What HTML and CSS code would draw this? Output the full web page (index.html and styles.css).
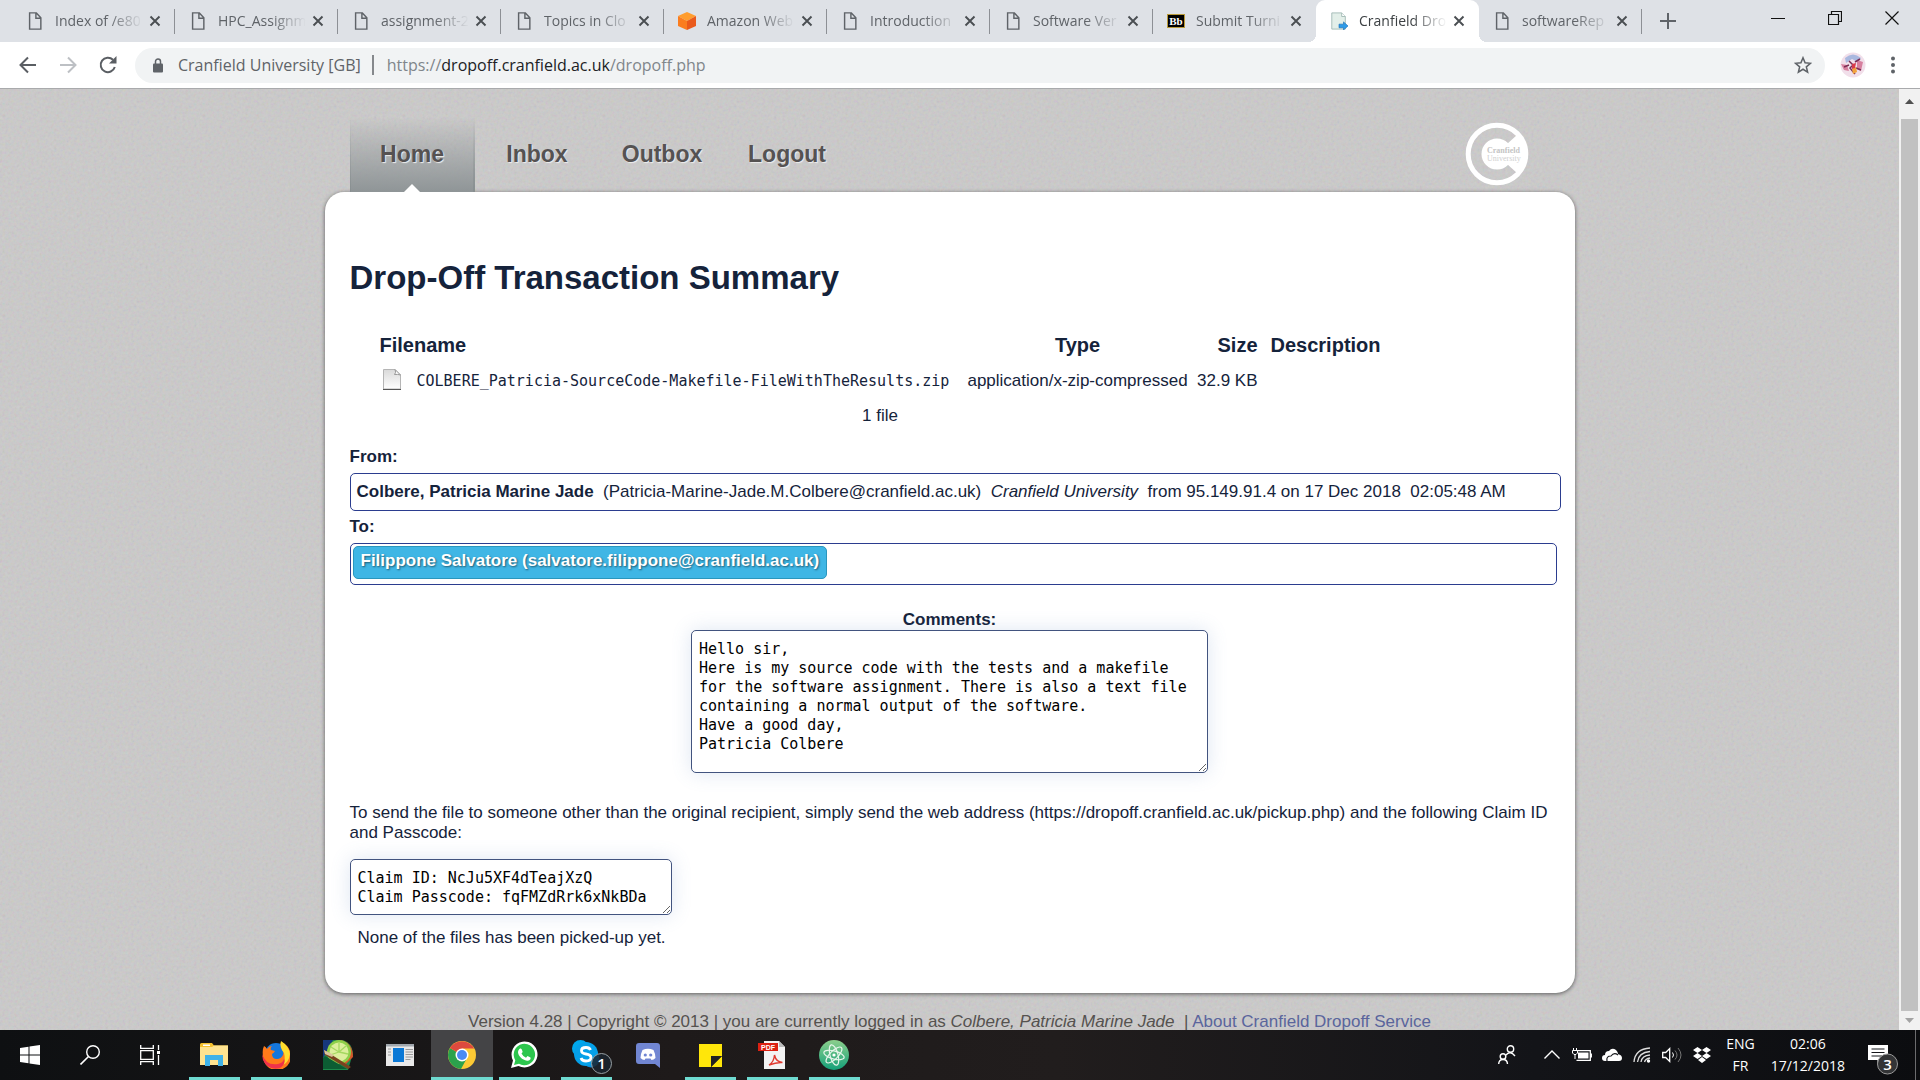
FILE: index.html
```html
<!DOCTYPE html>
<html lang="en">
<head>
<meta charset="utf-8">
<title>Cranfield Dropoff</title>
<link rel="stylesheet" href="styles.css">
</head>
<body>
<svg class="defs" aria-hidden="true">
  <symbol id="doc" viewBox="0 0 16 20"><path d="M2 1h7.500l5 5.500V19H2zM9 1.500V7h5" fill="none" stroke="#5f6368" stroke-width="1.600"/></symbol>
  <symbol id="x" viewBox="0 0 12 12"><path d="M1.500 1.500l9 9M10.500 1.500l-9 9" stroke="#4a4e52" stroke-width="1.900"/></symbol>
</svg>

<header class="browser">
  <div class="tabs">
    <div class="tab"><svg class="fav"><use href="#doc"/></svg><span class="tab-title">Index of /e80</span><button class="tab-close" aria-label="Close tab"><svg><use href="#x"/></svg></button></div>
    <div class="tab"><svg class="fav"><use href="#doc"/></svg><span class="tab-title">HPC_Assignm</span><button class="tab-close" aria-label="Close tab"><svg><use href="#x"/></svg></button></div>
    <div class="tab"><svg class="fav"><use href="#doc"/></svg><span class="tab-title">assignment-2</span><button class="tab-close" aria-label="Close tab"><svg><use href="#x"/></svg></button></div>
    <div class="tab"><svg class="fav"><use href="#doc"/></svg><span class="tab-title">Topics in Clo</span><button class="tab-close" aria-label="Close tab"><svg><use href="#x"/></svg></button></div>
    <div class="tab"><svg class="fav" viewBox="0 0 20 20"><path d="M10 0l10 4.500L10 10 0 4.500z" fill="#ff9d2e"/><path d="M0 4.500L10 10v10L0 15.500z" fill="#fb7d1f"/><path d="M20 4.500L10 10v10l10-4.500z" fill="#ea5a1c"/></svg><span class="tab-title">Amazon Web</span><button class="tab-close" aria-label="Close tab"><svg><use href="#x"/></svg></button></div>
    <div class="tab"><svg class="fav"><use href="#doc"/></svg><span class="tab-title">Introduction</span><button class="tab-close" aria-label="Close tab"><svg><use href="#x"/></svg></button></div>
    <div class="tab"><svg class="fav"><use href="#doc"/></svg><span class="tab-title">Software Ver</span><button class="tab-close" aria-label="Close tab"><svg><use href="#x"/></svg></button></div>
    <div class="tab no-line"><span class="fav bb">Bb</span><span class="tab-title">Submit Turni</span><button class="tab-close" aria-label="Close tab"><svg><use href="#x"/></svg></button></div>
    <div class="tab active"><svg class="fav" viewBox="0 0 20 20"><path d="M2 1h11l4 4v14H2z" fill="#e3efe9" stroke="#9fb9b3"/><path d="M13 1v4h4" fill="#fff" stroke="#9fb9b3"/><path d="M10 13.500h5V11l5 4.500-5 4.500v-2.500h-5z" fill="#2e9be8" stroke="#1b6fb5" stroke-width=".7"/></svg><span class="tab-title">Cranfield Dro</span><button class="tab-close" aria-label="Close tab"><svg><use href="#x"/></svg></button></div>
    <div class="tab"><svg class="fav"><use href="#doc"/></svg><span class="tab-title">softwareRep</span><button class="tab-close" aria-label="Close tab"><svg><use href="#x"/></svg></button></div>
    <button class="new-tab" aria-label="New tab"><svg width="16" height="16" viewBox="0 0 16 16"><path d="M8 0v16M0 8h16" stroke="#5f6368" stroke-width="2"/></svg></button>
    <div class="window-controls">
      <button aria-label="Minimize"><svg width="14" height="14" viewBox="0 0 14 14"><path d="M0 7.500h14" stroke="#111"/></svg></button>
      <button aria-label="Restore"><svg width="14" height="14" viewBox="0 0 14 14"><path d="M.5 3.500h10v10H.5zM3.500 3.500v-3h10v10h-3" fill="none" stroke="#111" stroke-width="1.200"/></svg></button>
      <button aria-label="Close"><svg width="14" height="14" viewBox="0 0 14 14"><path d="M.5.500l13 13M13.500.500l-13 13" stroke="#111" stroke-width="1.200"/></svg></button>
    </div>
  </div>
  <div class="toolbar">
    <button class="tool" aria-label="Back"><svg width="18" height="18" viewBox="0 0 18 18"><path d="M17 9H2M9 1.500L1.500 9 9 16.500" fill="none" stroke="#5a5e63" stroke-width="2"/></svg></button>
    <button class="tool" aria-label="Forward"><svg width="18" height="18" viewBox="0 0 18 18"><path d="M1 9h15M9 1.500L16.500 9 9 16.500" fill="none" stroke="#bdc0c4" stroke-width="2"/></svg></button>
    <button class="tool" aria-label="Reload"><svg width="18" height="18" viewBox="0 0 18 18"><path d="M15.800 11A7.200 7.200 0 1 1 14 3.800" fill="none" stroke="#5a5e63" stroke-width="2"/><path d="M17.500 0v7.500H10z" fill="#5a5e63"/></svg></button>
    <div class="omnibox">
      <svg width="12" height="15" viewBox="0 0 12 15"><rect x="1" y="5.500" width="10" height="9" rx="1" fill="#5f6368"/><path d="M3.500 6V3.500a2.500 2.500 0 0 1 5 0V6" fill="none" stroke="#5f6368" stroke-width="1.500"/></svg>
      <span class="cert">Cranfield University [GB]</span>
      <span class="url">https://<b>dropoff.cranfield.ac.uk</b>/dropoff.php</span>
      <button class="star" aria-label="Bookmark"><svg width="18" height="18" viewBox="0 0 20 20"><path d="M10 2l2.300 5.600 6 .5-4.600 3.900 1.400 5.900L10 14.700l-5.100 3.200L6.300 12 1.700 8.100l6-.5z" fill="none" stroke="#5f6368" stroke-width="1.700"/></svg></button>
    </div>
    <svg class="avatar" width="26" height="26" viewBox="0 0 26 26"><circle cx="13" cy="13" r="12.500" fill="#f1dfea"/><path d="M5 6q8-7 16 0l-3 4-6-3-6 4z" fill="#a9b8df"/><path d="M1 12l6 1 2 6-5-1zM17 8l6 2-2 9-4-2z" fill="#d7809f"/><path d="M9 9l4 4-3 3 5 6M15 10l5-3M4 15l5-2M16 16l5 2" stroke="#7c2f55" stroke-width="1.500" fill="none"/><path d="M12 17l4-2 1 5-4 2z" fill="#f2a23c"/><path d="M12 12l4-1-1 5-3 1z" fill="#d83b4c"/></svg>
    <button class="dots" aria-label="Menu"><svg width="6" height="18" viewBox="0 0 6 18"><g fill="#5f6368"><circle cx="3" cy="2.500" r="2"/><circle cx="3" cy="9" r="2"/><circle cx="3" cy="15.500" r="2"/></g></svg></button>
  </div>
</header>

<div class="viewport">
  <div class="page">
    <div class="wrap">
      <div class="top">
        <nav class="menu">
          <a class="current" href="#home">Home</a>
          <a href="#inbox">Inbox</a>
          <a href="#outbox">Outbox</a>
          <a href="#logout">Logout</a>
        </nav>
        <svg class="logo" width="64" height="64" viewBox="0 0 64 64" role="img" aria-label="Cranfield University">
          <circle cx="32" cy="32" r="28.800" fill="none" stroke="#fff" stroke-width="5"/>
          <circle cx="32" cy="32" r="15.500" fill="#fff"/>
          <path d="M42 22l10-9q8 8 8 19t-8 19l-10-9z" fill="#fff"/>
          <text x="22" y="31" class="logo-name">Cranfield</text>
          <text x="22" y="39" class="logo-sub">University</text>
        </svg>
      </div>

      <main class="card">
        <h1>Drop-Off Transaction Summary</h1>
        <table class="files">
          <colgroup><col class="c-icon"><col class="c-name"><col class="c-type"><col class="c-size"><col></colgroup>
          <thead>
            <tr><th colspan="2" class="left">Filename</th><th>Type</th><th class="right">Size</th><th class="desc">Description</th></tr>
          </thead>
          <tbody>
            <tr>
              <td class="file-icon"><svg width="18" height="21" viewBox="0 0 18 21"><defs><linearGradient id="pg" x1="0" y1="0" x2="0" y2="1"><stop offset="0" stop-color="#d9d9d9"/><stop offset="1" stop-color="#fff"/></linearGradient></defs><path d="M.5.500H12l5.500 5.500v14H.5z" fill="url(#pg)" stroke="#b5b5b5"/><path d="M12 .5q1.500 3-.5 5 3-.5 6 .5z" fill="#fff" stroke="#999"/><path d="M0 20.500h18" stroke="#555"/></svg></td>
              <td class="left mono">COLBERE_Patricia-SourceCode-Makefile-FileWithTheResults.zip</td>
              <td>application/x-zip-compressed</td>
              <td class="right">32.9 KB</td>
              <td></td>
            </tr>
            <tr><td colspan="5">1 file</td></tr>
          </tbody>
        </table>

        <h2 class="label from-label">From:</h2>
        <div class="box from"><b>Colbere, Patricia Marine Jade</b>&nbsp; (Patricia-Marine-Jade.M.Colbere@cranfield.ac.uk)&nbsp; <i>Cranfield University</i>&nbsp; from 95.149.91.4 on 17 Dec 2018&nbsp; 02:05:48 AM</div>
        <h2 class="label">To:</h2>
        <div class="box to"><span class="recipient">Filippone Salvatore (salvatore.filippone@cranfield.ac.uk)</span></div>

        <div class="comments">
          <label for="comments">Comments:</label>
          <textarea id="comments" readonly>Hello sir,
Here is my source code with the tests and a makefile
for the software assignment. There is also a text file
containing a normal output of the software.
Have a good day,
Patricia Colbere</textarea>
        </div>

        <p class="hint"><label for="claim">To send the file to someone other than the original recipient, simply send the web address (https://dropoff.cranfield.ac.uk/pickup.php) and the following Claim ID and Passcode:</label></p>
        <textarea id="claim" readonly>Claim ID: NcJu5XF4dTeajXzQ
Claim Passcode: fqFMZdRrk6xNkBDa</textarea>
        <p class="status">None of the files has been picked-up yet.</p>
      </main>

      <footer>Version 4.28 | Copyright © 2013 | you are currently logged in as <i>Colbere, Patricia Marine Jade</i>&nbsp; | <a href="#about">About Cranfield Dropoff Service</a></footer>
    </div>
  </div>
  <div class="scrollbar" aria-hidden="true">
    <svg width="21" height="30" viewBox="0 0 21 30"><path d="M6 15h9l-4.500-5z" fill="#505050"/></svg>
    <div class="thumb"></div>
    <svg width="21" height="19" viewBox="0 0 21 19"><path d="M6 7h9l-4.500 5z" fill="#a3a3a3"/></svg>
  </div>
</div>

<div class="taskbar">
  <div class="system">
    <button aria-label="Start"><svg width="20" height="20" viewBox="0 0 20 20"><path d="M0 3l8.500-1.300v7.800H0zM9.500 1.500L20 0v9.500H9.500zM0 10.500h8.500v7.800L0 17zM9.500 10.500H20V20L9.500 18.500z" fill="#fff"/></svg></button>
    <button aria-label="Search"><svg width="20" height="20" viewBox="0 0 20 20"><circle cx="13" cy="7" r="6.300" fill="none" stroke="#fff" stroke-width="1.400"/><path d="M8.500 11.500L.5 19.500" stroke="#fff" stroke-width="1.600"/></svg></button>
    <button aria-label="Task view"><svg width="20" height="20" viewBox="0 0 20 20"><path d="M.7 0v3.300h12.600V0M.7 5.700h12.600v8.600H.7zM.7 20v-3.300h12.600V20M18.500 0v5M18.500 10v10" fill="none" stroke="#fff" stroke-width="1.300"/><path d="M17 6h3v3h-3z" fill="#fff"/></svg></button>
  </div>
  <div class="apps">
    <button class="open" aria-label="File Explorer"><svg width="28" height="24" viewBox="0 0 28 24"><path d="M0 1.500Q0 0 1.500 0H12l2 2.500h14V22H0z" fill="#f5c12e"/><path d="M0 4h12l2-1.500h14V22H0z" fill="#fee390"/><path d="M3 1.500h7v1.500H3z" fill="#fff"/><path d="M5 23V12h18v11h-5v-6h-8v6z" fill="#3fb2e8"/></svg></button>
    <button class="open" aria-label="Firefox"><svg width="28" height="28" viewBox="0 0 28 28"><circle cx="14" cy="13" r="11" fill="#1477dd"/><path d="M2 5q2 1 3 3 2-3 5-3-2 2-1 4l4 1q-1 2-3 3 0 5 5 5 4 0 6-4 1-3-1-6-2-3-1-7 7 3 9 9a14 14 0 1 1-27 5Q0 9 2 5z" fill="#ff7a1a"/><path d="M19 0q8 5 9 13-1 8-7 11 3-5 1-12-5-6-3-12z" fill="#ffdd2d"/><path d="M0 13q4 12 16 10 5-1 6-5 2 5-4 9Q6 30 1 19z" fill="#f0324a"/></svg></button>
    <button aria-label="Paint tool"><svg width="30" height="30" viewBox="0 0 30 30"><path d="M0 0h20q9 3 10 13L25 30H0z" fill="#1c8a4a"/><path d="M0 0h10L0 18z" fill="#15377c"/><path d="M18 0q12 3 12 17l-8 8-6-10z" fill="#d5572a"/><circle cx="16" cy="12" r="12" fill="#8ed04a"/><circle cx="16" cy="12" r="9.500" fill="#dcef9c"/><path d="M16 12V3M16 12l7-6M16 12l9 2M16 12l-8-5M16 12l-9 3" stroke="#a5d860" stroke-width="1.300"/><path d="M1 10l27 17-3 2L2 15z" fill="#7a431f"/><path d="M1 10l10 5-2 2-7-3z" fill="#d8c59a"/><path d="M2 16l22 13H0V18z" fill="#0c5d33"/></svg></button>
    <button aria-label="Window application"><svg width="28" height="22" viewBox="0 0 28 22"><path d="M0 0h28v22H0z" fill="#e9e9e9"/><path d="M0 0h28v2.500H0z" fill="#a0a7ad"/><path d="M7 4h11v14H7z" fill="#0a78d6"/><path d="M2 5h3M2 8h3M2 11h3M19.500 5.500H27M19.500 8H27M19.500 10.500H27M19.500 13H27M19.500 15.500h5" stroke="#9a9a9a"/></svg></button>
    <button class="open focused" aria-label="Chrome"><svg width="28" height="28" viewBox="0 0 28 28"><circle cx="14" cy="14" r="14" fill="#fbc934"/><path d="M14 14L1.900 7A14 14 0 0 0 13 28l6-11z" fill="#2ba24c"/><path d="M14 14L1.900 7A14 14 0 0 1 26.100 7.500H14z" fill="#dd4a3e"/><circle cx="14" cy="14" r="6.500" fill="#fff"/><circle cx="14" cy="14" r="5" fill="#4a8af4"/></svg></button>
    <button class="open" aria-label="WhatsApp"><svg width="28" height="28" viewBox="0 0 28 28"><path d="M1 27l2-7.500A13 13 0 1 1 8.500 25z" fill="#fff"/><path d="M4 24l1.300-4.800a10.700 10.700 0 1 1 3.700 3.600z" fill="#2cc64d"/><path d="M9 8.500c1-1.500 2.500-1 3 .5l.7 2-1.200 1.500q1.500 3 4.500 4.200l1.500-1.700 3 1.500c.7 2-1.500 3.500-3.500 3.300-5-.8-8.800-5-9-8.500q0-1.700 1-2.800z" fill="#fff"/></svg></button>
    <button class="open" aria-label="Skype"><svg class="skype" width="40" height="34" viewBox="0 0 40 34"><circle cx="8.500" cy="8.500" r="8.500" fill="#00a8ec"/><circle cx="19" cy="19" r="8.500" fill="#0a8fdd"/><circle cx="14" cy="14" r="12" fill="#05a0e8"/><path d="M18.500 10Q17.500 7.500 14 7.500q-4.500 0-4.500 3t4.500 3.500q5 .7 5 3.500 0 3.500-5 3.500-4 0-5-3" fill="none" stroke="#fff" stroke-width="2.800"/><circle cx="29.500" cy="23.500" r="10" fill="#1b2630" fill-opacity=".85" stroke="#98a0a4"/><text x="29.500" y="29" class="badge-text">1</text></svg></button>
    <button aria-label="Discord"><svg width="24" height="26" viewBox="0 0 24 26"><path d="M3 1h18q3 0 3 3v22l-5-4H3q-3 0-3-3V4q0-3 3-3z" fill="#7186d2"/><path d="M6.500 8q5.500-2.500 11 0 2 4 2 8-2 2-4 2l-1-1.500h-5L8.500 18q-2 0-4-2 0-4 2-8z" fill="#fff"/><circle cx="9.300" cy="13" r="1.600" fill="#7186d2"/><circle cx="14.700" cy="13" r="1.600" fill="#7186d2"/></svg></button>
    <button class="open" aria-label="Sticky Notes"><svg width="23" height="23" viewBox="0 0 23 23"><path d="M0 0h23v12H12v11H0z" fill="#ffe60a"/><path d="M23 12v11H12z" fill="#ffe60a"/><path d="M12 12h11L12 23z" fill="#222"/></svg></button>
    <button class="open" aria-label="PDF"><svg width="28" height="28" viewBox="0 0 28 28"><path d="M6 0h15l6 6v22H6z" fill="#f3f3f3"/><path d="M21 0v6h6z" fill="#bbb"/><path d="M0 2h20v8H0z" fill="#dc2012"/><text x="10" y="8.500" class="pdf-text">PDF</text><path d="M11 24q5-3 5.500-10 1.500 7 8 7.500-6-.5-13.500 2.500z" fill="none" stroke="#df3a30" stroke-width="1.400"/></svg></button>
    <button class="open" aria-label="Atom"><svg width="30" height="30" viewBox="0 0 30 30"><defs><linearGradient id="at" x1="0" y1="0" x2="0" y2="1"><stop offset="0" stop-color="#8ccf8c"/><stop offset="1" stop-color="#14a079"/></linearGradient></defs><circle cx="15" cy="15" r="15" fill="url(#at)"/><g fill="none" stroke="#e8f6ec" stroke-width="1.200"><ellipse cx="15" cy="15" rx="10.500" ry="4" transform="rotate(15 15 15)"/><ellipse cx="15" cy="15" rx="10.500" ry="4" transform="rotate(75 15 15)"/><ellipse cx="15" cy="15" rx="10.500" ry="4" transform="rotate(135 15 15)"/></g><circle cx="15" cy="15" r="1.600" fill="#fff"/></svg></button>
  </div>
  <div class="tray">
    <svg class="people" width="18" height="20" viewBox="0 0 18 20"><g fill="none" stroke="#fff" stroke-width="1.400"><circle cx="12.500" cy="4" r="3.200"/><path d="M8 10q4-5 9 1"/><circle cx="5" cy="11.500" r="2.800"/><path d="M.7 19q0-4.500 4.300-4.500T9.500 19"/></g></svg>
    <svg width="20" height="20" viewBox="0 0 20 20"><path d="M2.500 13.500L10 6l7.500 7.500" fill="none" stroke="#fff" stroke-width="1.400"/></svg>
    <svg width="20" height="20" viewBox="0 0 20 20"><path d="M4.500 5.700h13.800v9.600H4.500M19.300 8.500v4" fill="none" stroke="#fff" stroke-width="1.300"/><path d="M6 7.500h10.500v6H6z" fill="#fff"/><path d="M1.500 3v3M4.500 3v3M.5 5.500h5v2.500l-1.500 1.500H2L.5 8zM3 9v5" stroke="#fff" fill="#15161a"/></svg>
    <svg width="20" height="20" viewBox="0 0 20 20"><path d="M0 13q0-3 3-3 0-4 4-4 3-4 7-1 2 2 2 4 4 1 4 4 0 3-3 3H3q-3 0-3-3z" fill="#fff"/><path d="M5 16q-1-5 4-5 3-4 7-1" fill="none" stroke="#15161a" stroke-width="1.200"/></svg>
    <svg width="20" height="20" viewBox="0 0 20 20"><g fill="none" stroke="#ddd" stroke-width="1.300"><path d="M2 17Q3 4 18 3"/><path d="M5.500 17Q6.500 7.500 18 6.500"/><path d="M9 17q1-6.500 9-7"/><path d="M12.500 17q1-3.500 5.500-4"/></g><circle cx="16.500" cy="16" r="1.700" fill="#fff"/></svg>
    <svg width="20" height="20" viewBox="0 0 20 20"><path d="M.7 7.500h3l4-4v13l-4-4h-3z" fill="none" stroke="#fff" stroke-width="1.300"/><path d="M10.500 7.500q2 2.500 0 5" fill="none" stroke="#fff"/><path d="M13 5.500q4 4.500 0 9M16 3q6 7 0 14" fill="none" stroke="#777"/></svg>
    <svg width="20" height="20" viewBox="0 0 20 20"><path d="M5.500 2L10 5 5.500 8 1 5zM14.500 2L19 5l-4.500 3L10 5zM5.500 8l4.500 3-4.500 3L1 11zM14.500 8l4.500 3-4.500 3-4.500-3zM10 12l4 3-4 3-4-3z" fill="#fff"/></svg>
    <div class="lang"><span>ENG</span><span>FR</span></div>
    <div class="clock"><span>02:06</span><span>17/12/2018</span></div>
    <svg class="notice" width="32" height="32" viewBox="0 0 32 32"><path d="M1 2h20v15h-7l-3.500 3.500V17H1z" fill="#fff"/><path d="M4.500 6h13M4.500 9.500h13M4.500 13h13" stroke="#15161a" stroke-width="1.200"/><circle cx="20.500" cy="21" r="10" fill="#333436" stroke="#9a9a9a"/><text x="20.500" y="26.500" class="badge-text">3</text></svg>
  </div>
</div>
</body>
</html>
```
FILE: styles.css
```css
* { box-sizing: border-box; }

body {
  margin: 0;
  height: 100vh;
  display: flex;
  flex-direction: column;
  overflow: hidden;
  font-family: "Liberation Sans", Arial, sans-serif;
  font-size: 17px;
  line-height: 20px;
  color: #15233b;
}

button {
  display: flex;
  align-items: center;
  justify-content: center;
  padding: 0;
  border: 0;
  background: none;
}

svg { display: block; flex: none; }
.defs { display: none; }

/* Browser window */
.browser {
  flex: none;
  font-family: "Open Sans", "Noto Sans", sans-serif;
  color: #5f6368;
  border-bottom: 1px solid #a9aaac;
}

.tabs {
  display: flex;
  height: 42px;
  padding-left: 12px;
  background: #dee1e6;
}

.tab {
  position: relative;
  flex: 0 1 163px;
  min-width: 0;
  display: flex;
  align-items: center;
  padding: 0 10px 0 14px;
  font-size: 14px;
}

.tab::after {
  content: "";
  position: absolute;
  right: 0;
  top: 9px;
  bottom: 8px;
  width: 1px;
  background: #8d9095;
}

.no-line::after { display: none; }

.fav { width: 18px; height: 18px; margin-right: 11px; flex: none; }

.bb {
  height: 14px;
  border: 1px solid #b99a3a;
  background: #000;
  color: #fff;
  font: bold 11px/12px "Liberation Serif", serif;
  text-align: center;
}

.tab-title {
  flex: 1;
  min-width: 0;
  overflow: hidden;
  white-space: nowrap;
  mask-image: linear-gradient(90deg, #000 60%, transparent);
}

.tab-close { width: 20px; height: 20px; margin-left: 2px; }
.tab-close svg { width: 12px; height: 12px; }

.active {
  background: #fff;
  border-radius: 9px 9px 0 0;
  color: #3c4043;
}

.active::before,
.active::after {
  content: "";
  position: absolute;
  top: auto;
  bottom: 0;
  width: 8px;
  height: 8px;
}

.active::before { left: -8px; background: radial-gradient(circle at 0 0, #dee1e6 8px, #fff 8px); }
.active::after { right: -8px; background: radial-gradient(circle at 100% 0, #dee1e6 8px, #fff 8px); }

.new-tab { width: 52px; }

.window-controls { display: flex; height: 36px; margin-left: auto; }
.window-controls button { width: 57px; }

.toolbar {
  display: flex;
  align-items: center;
  height: 46px;
  padding: 0 8px;
  background: #fff;
}

.tool { width: 40px; height: 36px; }

.omnibox {
  flex: 1;
  display: flex;
  align-items: center;
  height: 35px;
  margin-left: 7px;
  padding: 0 13px 0 17px;
  border-radius: 18px;
  background: #f1f3f4;
  font-size: 16px;
}

.cert { margin-left: 14px; padding-right: 11px; border-right: 2px solid #85888c; }
.url { margin-left: 13px; color: #80868b; }
.url b { font-weight: 400; color: #202124; }
.star { margin-left: auto; }
.avatar { margin-left: 15px; }
.dots { width: 38px; margin-left: 8px; }

/* Page area */
.viewport { flex: 1; min-height: 0; display: flex; }

.page {
  flex: 1;
  overflow: hidden;
  background: #cbcaca url("data:image/svg+xml,%3Csvg xmlns='http://www.w3.org/2000/svg' width='200' height='200'%3E%3Cfilter id='n'%3E%3CfeTurbulence type='fractalNoise' baseFrequency='.35' numOctaves='2' stitchTiles='stitch'/%3E%3C/filter%3E%3Crect width='200' height='200' filter='url(%23n)' opacity='.2'/%3E%3C/svg%3E");
}

.wrap { max-width: 1250px; margin: 0 auto; }

.top {
  display: flex;
  align-items: flex-end;
  justify-content: space-between;
  padding: 28px 46px 0 25px;
}

.logo { margin-bottom: 6px; }
.logo-name { font: bold 8px "Liberation Serif", serif; fill: #c4c4c4; }
.logo-sub { font: 8px "Liberation Serif", serif; fill: #d0d0d0; }

.menu { display: flex; height: 75px; }

.menu a {
  position: relative;
  width: 125px;
  line-height: 75px;
  text-align: center;
  font-size: 23px;
  font-weight: 700;
  color: #555252;
  text-decoration: none;
  text-shadow: 1px 1px 1px #eee;
}

.menu .current {
  background: linear-gradient(rgba(142, 148, 150, 0), #8f9597);
}

.menu .current::before {
  content: "";
  position: absolute;
  inset: 0;
  background: linear-gradient(rgba(110, 118, 120, 0), #80888a);
  clip-path: polygon(0 0, 1px 0, 1px 100%, 124px 100%, 124px 0, 125px 0, 125px 100%, 0 100%);
}

.menu .current::after {
  content: "";
  position: absolute;
  left: 54px;
  bottom: 0;
  border: 8px solid transparent;
  border-top: 0;
  border-bottom-color: #fff;
}

.card {
  padding: 67px 14px 45px 25px;
  border-radius: 19px;
  background: #fff;
  box-shadow: 0 1px 4px rgba(0, 0, 0, .55);
}

h1 { margin: 0 0 31px; font-size: 33px; line-height: 38px; }

.files {
  width: 1001px;
  margin-left: 30px;
  table-layout: fixed;
  border-collapse: collapse;
  text-align: center;
}

.files th, .files td { height: 35px; padding: 0; white-space: nowrap; }
.files th { padding-bottom: 2px; font-size: 20px; }
.files .left { text-align: left; }
.files .right { text-align: right; }
.files .desc { text-align: left; padding-left: 13px; }
.files .file-icon { padding-bottom: 2px; }
.file-icon svg { margin-left: 3px; }
.c-icon { width: 37px; }
.c-name { width: 546px; }
.c-type { width: 230px; }
.c-size { width: 65px; }
.mono { font-family: "DejaVu Sans Mono", monospace; font-size: 15px; }

.label { margin: 6px 0; font-size: 17px; line-height: 20px; }
.from-label { margin-top: 14px; }

.box { border: 1px solid #2b3d8f; border-radius: 5px; }
.from { padding: 8px 6px; }
.to { display: flex; margin-right: 4px; padding: 2px 2px 5px; }

.recipient {
  padding: 4px 7px 7px;
  border: 1px solid #2a96bd;
  border-radius: 5px;
  background: #3fb6e5;
  color: #fff;
  font-size: 17px;
  font-weight: 700;
  text-shadow: 1px 1px 2px rgba(0, 0, 0, .5);
}

.comments {
  display: flex;
  flex-direction: column;
  align-items: center;
  margin: 25px 11px 0 0;
}

.comments label { font-weight: 700; }

textarea {
  display: block;
  margin: 0;
  padding: 9px 7px;
  border: 1px solid #42547f;
  border-radius: 5px;
  outline: 0;
  background: #fff;
  box-shadow: 0 0 20px rgba(90, 130, 190, .2);
  color: #000;
  font-family: "DejaVu Sans Mono", monospace;
  font-size: 15px;
  line-height: 19px;
  overflow: hidden;
}

#comments { width: 517px; height: 143px; }
#claim { width: 322px; height: 56px; }

.hint { margin: 30px 0 16px; }
.status { margin: 13px 0 0 8px; }

footer { margin-top: 19px; text-align: center; color: #55524f; }
footer a { color: #5a659c; text-decoration: none; }

.scrollbar {
  display: flex;
  flex-direction: column;
  width: 21px;
  background: #f1f1f1;
}

.thumb { flex: 1; margin: 0 2px; background: #c1c1c1; }

/* Taskbar */
.taskbar {
  flex: none;
  display: flex;
  height: 50px;
  background: linear-gradient(90deg, #0e1012, #1e1a1a 35%, #211d1d 55%, #131418 80%, #0c0d10);
  color: #fff;
}

.system, .apps { display: flex; }
.system { margin-right: 3px; }
.system button { width: 60px; }

.apps button { position: relative; width: 62px; }
.apps .focused { background: #444446; }
.skype { margin: 4px 0 0 12px; }

.apps .open::after {
  content: "";
  position: absolute;
  left: 6px;
  right: 5px;
  bottom: 0;
  height: 3px;
  background: #6edad0;
}

.apps .focused::after { left: 0; right: 0; }

.tray {
  display: flex;
  align-items: center;
  gap: 10px;
  margin-left: auto;
  margin-right: 4px;
  padding-right: 16px;
  border-right: 1px solid #6c6c6e;
  font-family: "Open Sans", "Noto Sans", sans-serif;
  font-size: 14px;
  line-height: 22px;
  text-align: center;
}

.people { margin-right: 16px; }
.lang, .clock { display: flex; flex-direction: column; }
.lang { margin-left: 4px; }
.clock { margin: 0 12px 0 6px; }
.notice { margin-top: 8px; }

.badge-text { font: 600 15px "Open Sans", sans-serif; fill: #fff; text-anchor: middle; }
.pdf-text { font: bold 7px "Liberation Sans", sans-serif; fill: #fff; text-anchor: middle; }
```
